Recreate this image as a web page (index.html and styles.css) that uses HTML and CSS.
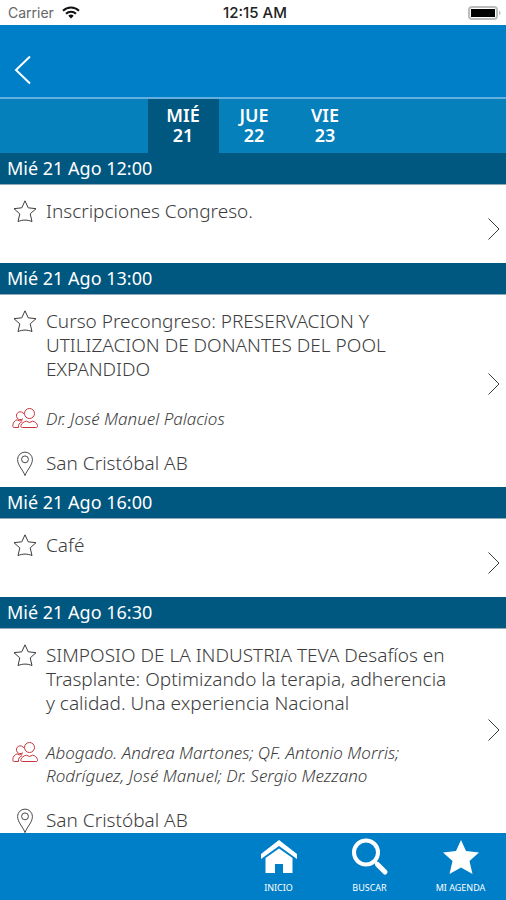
FILE: index.html
```html
<!DOCTYPE html>
<html lang="es">
<head>
<meta charset="utf-8">
<meta name="viewport" content="width=device-width, initial-scale=1">
<title>Agenda</title>
<link rel="stylesheet" href="styles.css">
</head>
<body>
<svg class="defs" aria-hidden="true">
  <symbol id="star" viewBox="0 0 24 24"><path d="M12 1.800l3.200 7 7.800.9-5.800 5.200 1.800 7.700c-4-2-10-2-14 0l1.800-7.700L1 9.700l7.800-.9z"/></symbol>
  <symbol id="people" viewBox="0 0 26 22"><circle cx="17.500" cy="6.500" r="5"/><path d="M10.500 20.500c-1.400 0-2-.8-1.600-2 .8-2.500 3-3.900 5.600-4.300l3 1.300 3-1.300c2.600.4 4.300 1.800 5 4.300.4 1.200-.2 2-1.600 2z"/><path d="M10.800 11.700A3.900 3.900 0 1 1 11.800 7M5 12.800c-2.500.9-4 2.800-4.200 5.700-.1 1.300.3 2 1.400 2h4.300M5 12.800l2.700 1.200 2.800-1.200M6.500 20.500c-.4-2.800.8-4.800 3.600-5.800"/></symbol>
  <symbol id="pin" viewBox="0 0 18 28"><path d="M9 26.500C7.600 21.400 1 15.500 1 9.200a8 8 0 0 1 16 0C17 15.500 10.400 21.400 9 26.500z"/><circle cx="9" cy="9" r="3.700"/></symbol>
  <symbol id="next" viewBox="0 0 14 24"><path d="M1.500 1.500L12 12 1.500 22.500"/></symbol>
</svg>
<div class="app">
  <div class="status">
    <div class="carrier"><span>Carrier</span>
      <svg class="wifi" viewBox="0 0 18 13" aria-hidden="true"><path d="M1 4.800a11.500 11.500 0 0 1 16 0M4 7.800a7 7 0 0 1 10 0"/><path class="wifi-dot" d="M9 12.500L6.300 9.800a4 4 0 0 1 5.400 0z"/></svg>
    </div>
    <time class="clock">12:15 AM</time>
    <svg class="battery" viewBox="0 0 34 14" aria-hidden="true"><rect class="case" x="1" y="1" width="28" height="12" rx="3"/><rect x="3" y="3" width="24" height="8"/><path class="cap" d="M31 5c2 .5 2 3.500 0 4z"/></svg>
  </div>
  <header class="header">
    <button class="back" type="button" aria-label="Volver"><svg viewBox="0 0 18 30" aria-hidden="true"><path d="M16 1.500L2 15l14 13.500"/></svg></button>
  </header>
  <nav class="days" aria-label="Días">
    <a class="day day-active" href="#mie"><span>MIÉ</span><span>21</span></a>
    <a class="day" href="#jue"><span>JUE</span><span>22</span></a>
    <a class="day" href="#vie"><span>VIE</span><span>23</span></a>
  </nav>
  <main class="agenda" id="mie">
    <h2 class="slot">Mié 21 Ago 12:00</h2>
    <article class="event event-short">
      <div class="details">
        <div class="line"><button class="fav" type="button" aria-label="Agregar a mi agenda"><svg><use href="#star"/></svg></button><h3 class="title">Inscripciones Congreso.</h3></div>
      </div>
      <a class="more" href="#e1" aria-label="Ver detalle"><svg><use href="#next"/></svg></a>
    </article>
    <h2 class="slot">Mié 21 Ago 13:00</h2>
    <article class="event">
      <div class="details">
        <div class="line"><button class="fav" type="button" aria-label="Agregar a mi agenda"><svg><use href="#star"/></svg></button><h3 class="title">Curso Precongreso: PRESERVACION Y UTILIZACION DE DONANTES DEL POOL EXPANDIDO</h3></div>
        <div class="line speakers"><svg class="people" aria-hidden="true"><use href="#people"/></svg><p>Dr. José Manuel Palacios</p></div>
        <div class="line place"><svg class="pin" aria-hidden="true"><use href="#pin"/></svg><p>San Cristóbal AB</p></div>
      </div>
      <a class="more" href="#e2" aria-label="Ver detalle"><svg><use href="#next"/></svg></a>
    </article>
    <h2 class="slot">Mié 21 Ago 16:00</h2>
    <article class="event event-short">
      <div class="details">
        <div class="line"><button class="fav" type="button" aria-label="Agregar a mi agenda"><svg><use href="#star"/></svg></button><h3 class="title">Café</h3></div>
      </div>
      <a class="more" href="#e3" aria-label="Ver detalle"><svg><use href="#next"/></svg></a>
    </article>
    <h2 class="slot">Mié 21 Ago 16:30</h2>
    <article class="event">
      <div class="details">
        <div class="line"><button class="fav" type="button" aria-label="Agregar a mi agenda"><svg><use href="#star"/></svg></button><h3 class="title">SIMPOSIO DE LA INDUSTRIA TEVA Desafíos en Trasplante: Optimizando la terapia, adherencia y calidad. Una experiencia Nacional</h3></div>
        <div class="line speakers"><svg class="people" aria-hidden="true"><use href="#people"/></svg><p>Abogado. Andrea Martones; QF. Antonio Morris; Rodríguez, José Manuel; Dr. Sergio Mezzano</p></div>
        <div class="line place"><svg class="pin" aria-hidden="true"><use href="#pin"/></svg><p>San Cristóbal AB</p></div>
      </div>
      <a class="more" href="#e4" aria-label="Ver detalle"><svg><use href="#next"/></svg></a>
    </article>
  </main>
  <nav class="tabs" aria-label="Principal">
    <a class="tab" href="#inicio"><svg viewBox="0 0 38 38" aria-hidden="true"><path d="M19 2l18 14v5L19 8 1 21v-5z"/><path d="M19 10.500L32.500 20v15H23v-9h-8v9H5.500V20z"/></svg><span>INICIO</span></a>
    <a class="tab" href="#buscar"><svg viewBox="0 0 38 38" aria-hidden="true"><circle class="lens" cx="15" cy="14.500" r="12"/><path class="handle-neck" d="M23 22.500l4 4"/><path class="handle" d="M26.500 26.500l7.500 7.500"/></svg><span>BUSCAR</span></a>
    <a class="tab" href="#agenda"><svg viewBox="0 0 38 38" aria-hidden="true"><path d="M19 2l5 11 13 1.500-9.500 8.500L30.500 36 19 29.500 7.500 36l3-13L1 14.500 14 13z"/></svg><span>MI AGENDA</span></a>
  </nav>
</div>
</body>
</html>
```

FILE: styles.css
```css
* { box-sizing: border-box; }
body, h2, h3, p { margin: 0; }
body {
  font-family: "Noto Sans", "Open Sans", sans-serif;
  color: #3c3c3c;
  background: #fff;
}
a { color: inherit; text-decoration: none; }
button { border: 0; padding: 0; background: none; color: inherit; }
svg { display: block; fill: none; stroke: currentColor; flex: none; }
.defs { display: none; }

.app { display: flex; flex-direction: column; height: 100vh; overflow: hidden; }

.status {
  display: grid;
  grid-template-columns: 1fr auto 1fr;
  align-items: center;
  height: 25px;
  flex: none;
  padding: 0 4px 0 8px;
  font: 14px/25px Inter, sans-serif;
  color: #222;
}
.carrier { display: flex; align-items: center; gap: 8px; color: #666; }
.wifi { width: 18px; height: 13px; color: #111; stroke-width: 2; }
.wifi-dot { fill: currentColor; stroke: none; }
.clock { font-size: 15px; font-weight: 500; }
.battery { width: 34px; height: 14px; justify-self: end; fill: #000; stroke: none; }
.battery .case { fill: none; stroke: #bbb; stroke-width: 2; }
.battery .cap { fill: #bbb; }

.header {
  display: flex;
  align-items: center;
  height: 74px;
  flex: none;
  padding: 18px 14px 0;
  color: #fff;
  background: #007fc9;
  border-bottom: 2px solid #62b0df;
}
.back svg { width: 18px; height: 30px; stroke-width: 2; }

.days {
  display: flex;
  justify-content: center;
  height: 54px;
  flex: none;
  padding-left: 2px;
  color: #fff;
  background: #0580ba;
}
.day { display: flex; flex-direction: column; align-items: center; width: 71px; padding-top: 6px; font-size: 18px; line-height: 20px; font-weight: 600; }
.day-active { background: #00577f; }

.agenda { flex: 1; min-height: 0; overflow: hidden; }
.slot {
  height: 32px;
  padding-left: 7px;
  font-size: 18px;
  line-height: 31px;
  font-weight: 400;
  color: #fff;
  background: #00577f;
  border-bottom: 1px solid #8fa9b8;
}
.event { display: flex; align-items: center; padding: 14px 5px 10px 12px; }
.event-short { min-height: 78px; }
.details { flex: 1; align-self: flex-start; }
.line { display: grid; grid-template-columns: 26px 1fr; column-gap: 8px; padding-right: 34px; font-size: 19px; line-height: 24px; font-weight: 300; }
.title { font: inherit; }
.fav { height: 24px; justify-self: center; }
.fav svg { width: 24px; height: 24px; stroke-width: 1; }
.speakers { margin-top: 26px; font-size: 17px; line-height: 23px; font-style: italic; }
.people { width: 26px; height: 22px; color: #c9333d; stroke-width: 1; }
.place { margin-top: 21px; }
.pin { width: 18px; height: 26px; justify-self: center; stroke-width: 1; }
.more svg { width: 14px; height: 24px; }
.more { margin-bottom: 18px; }
.event-short .more { margin: 6px 0 0; }

.tabs {
  display: flex;
  justify-content: flex-end;
  height: 67px;
  flex: none;
  color: #fff;
  background: #007fc9;
}
.tab { display: flex; flex-direction: column; align-items: center; gap: 4px; width: 91px; padding-top: 5px; font-size: 9px; line-height: 16px; }
.tab svg { width: 38px; height: 38px; fill: currentColor; stroke: none; }
.tab .lens { fill: none; stroke: currentColor; stroke-width: 4; }
.tab .handle-neck { stroke: currentColor; stroke-width: 3; }
.tab .handle { stroke: currentColor; stroke-width: 5; stroke-linecap: round; }
```
